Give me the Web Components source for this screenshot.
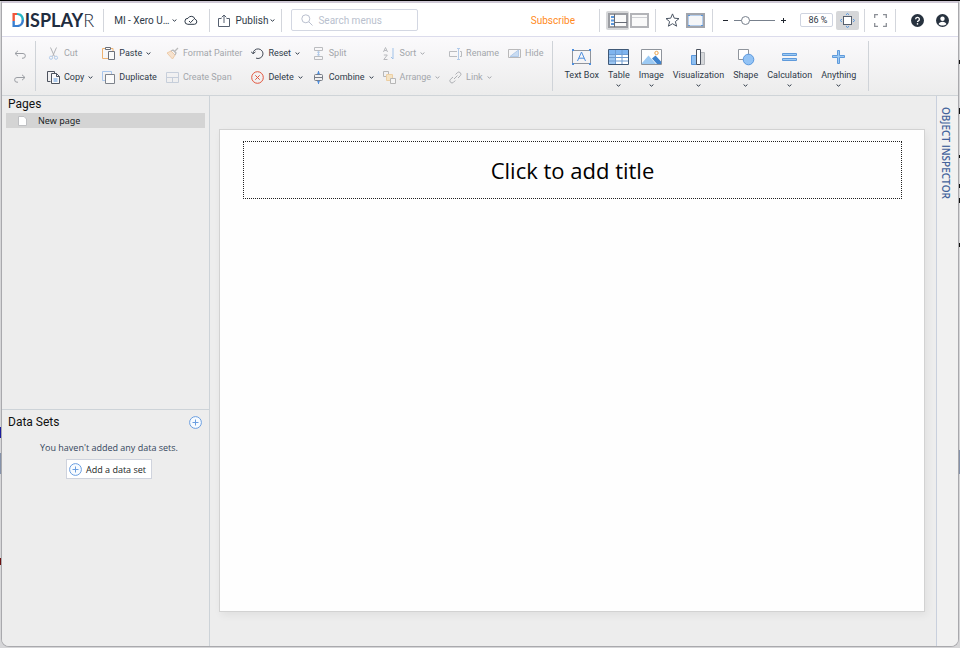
<!DOCTYPE html>
<html lang="en">
<head>
<meta charset="utf-8">
<title>Displayr</title>
<style>
  html, body { height: 100%; margin: 0; }
  body {
    box-sizing: border-box;
    background:
      linear-gradient(#00000000 60px, #111 60px 64px, #00000000 64px 108px, #111 108px 114px, #00000000 114px 155px, #111 155px 158px, #00000000 158px 184px, #111 184px 188px, #00000000 188px 198px, #111 198px 203px, #00000000 203px 243px, #111 243px 247px, #00000000 247px 450px, #8592aa 450px 474px, #00000000 474px) right / 1px 100% no-repeat,
      linear-gradient(#00000000 427px, #1c1c9c 427px 438px, #00000000 438px 453px, #8592aa 453px 474px, #00000000 474px 558px, #6b1010 558px 565px, #00000000 565px) left / 1px 100% no-repeat,
      #d6d6d8;
    border-top: 1px solid #000;
    padding: 0 1px 1px 1px;
    font-family: Roboto, "Liberation Sans", sans-serif;
    font-size: 9px;
    color: #2f3a48;
    overflow: hidden;
  }
</style>
</head>
<body>
<dr-app></dr-app>
<script>
const RESET = `
  *, *::before, *::after { box-sizing: border-box; }
  button, input { font: inherit; color: inherit; margin: 0; padding: 0; border: 0; background: none; }
  button { display: flex; align-items: center; justify-content: center; cursor: pointer; white-space: nowrap; }
  a { color: inherit; text-decoration: none; }
`;

function define(name, css, html) {
  const template = document.createElement('template');
  template.innerHTML = `<style>${RESET}${css}</style>${html}`;
  customElements.define(name, class extends HTMLElement {
    constructor() {
      super();
      this.attachShadow({ mode: 'open' }).append(template.content.cloneNode(true));
    }
  });
}

/* name: [width, height, markup] */
const ICONS = {
  chevron: [5, 3, '<path d="M.6.6 2.5 2.2 4.4.6" stroke="currentColor" stroke-width="1"/>'],
  cloud: [14, 10, '<path d="M3.8 9.3h6.6a2.6 2.6 0 0 0 .5-5.1A3.7 3.7 0 0 0 4 3.3a3 3 0 0 0-.2 6z" stroke="#2f3a48"/><path d="m5 6 1.6 1.6 3-3.2" stroke="#2f3a48"/>'],
  publish: [12, 13, '<path d="M3.500 4.500H.5v8h11v-8H8.500M6 9V1M3.700 3.300 6 1l2.300 2.300" stroke="#566070"/>'],
  search: [12, 12, '<circle cx="4.800" cy="4.800" r="4" stroke="#b9bfce"/><path d="m7.800 7.800 3.700 3.700" stroke="#b9bfce"/>'],
  layout: [20, 15, '<rect x="1" y="1" width="18" height="13" fill="#fafafa" stroke="#9b9da2" stroke-width="2"/><path d="M6.500 1v13M7 9.500h12" stroke="#666b75"/><path d="M3 4h3M3 7.500h3M3 11h3" stroke="#5a97dc" stroke-width="2"/>'],
  panel: [19, 15, '<rect x="1" y="1" width="17" height="13" fill="#fafafa" stroke="#b3b4b8" stroke-width="2"/><path d="M2 4.500h15" stroke="#cfd0d4"/>'],
  star: [15, 14, '<path d="m7.500.9 1.800 4.300 4.700.4-3.600 3 1.200 4.600-4.100-2.500-4.100 2.500 1.200-4.600-3.600-3 4.700-.4z" stroke="#4b5563"/>'],
  frame: [19, 15, '<rect x="1" y="1" width="17" height="13" fill="#f5f6f8" stroke="#a2a5ac" stroke-width="2"/><path d="M2.500 2.500h14v10h-14z" stroke="#b4cdec"/><path d="M2 2h2v1H2zM15 2h2v1h-2zM2 12h2v1H2zM15 12h2v1h-2z" fill="#5a97dc"/>'],
  minus: [5, 5, '<path d="M0 2.500h5" stroke="#20262f"/>'],
  plus: [5, 5, '<path d="M0 2.500h5M2.500 0v5" stroke="#20262f"/>'],
  fit: [15, 15, '<rect x="3.500" y="3.500" width="8" height="8" fill="#fff" stroke="#555e6c"/><path d="M6 1.800 7.500.5 9 1.800M6 13.200l1.500 1.300L9 13.200M1.800 6 .5 7.500 1.800 9M13.200 6l1.300 1.500L13.200 9" stroke="#4f93de"/>'],
  full: [13, 13, '<path d="M.7 4V.7H4M9 .7h3.300V4M12.300 9v3.300H9M4 12.300H.7V9" stroke="#8b8f96" stroke-width="1.300"/>'],
  help: [13, 13, '<circle cx="6.500" cy="6.500" r="6.500" fill="#27323f"/><path d="M4.600 5.200a1.900 1.900 0 1 1 2.800 1.700c-.6.300-.9.600-.9 1.200" stroke="#fff" stroke-width="1.300"/><circle cx="6.500" cy="9.900" r=".8" fill="#fff"/>'],
  user: [13, 13, '<circle cx="6.500" cy="6.500" r="6.500" fill="#27323f"/><circle cx="6.500" cy="4.700" r="2.200" fill="#fff"/><path d="M2.600 10.300c.3-3.400 7.500-3.400 7.800 0-2 1.600-5.800 1.600-7.800 0z" fill="#fff"/>'],
  undo: [12, 9, '<path d="M4 .8 1 3.500l3 2.700M1.200 3.500H9a2.300 2.300 0 0 1 0 4.700H8" stroke="#9a9da3"/>'],
  redo: [12, 9, '<path d="m8 .8 3 2.700-3 2.700m2.800-2.700H3a2.300 2.300 0 0 0 0 4.700h1" stroke="#9a9da3"/>'],
  cut: [13, 13, '<path d="m3.500.5 4 9M9.500.5l-4 9" stroke="#777a80"/><circle cx="4" cy="10.700" r="1.600" stroke="#7aa7de"/><circle cx="9" cy="10.700" r="1.600" stroke="#7aa7de"/>'],
  copy: [13, 13, '<path d="M3.500 10.500h-3V.5h7v2" stroke="#4d535e"/><path d="M4.500 2.500h5l3 3v7h-8z" fill="#fafafa" stroke="#4d535e"/><path d="M9.500 2.500v3h3" stroke="#4d535e"/><path d="M6.500 8h4M6.500 10h4" stroke="#5a97dc"/>'],
  paste: [13, 13, '<path d="M3 1.500H.5v10H6M9 1.500h2V4" stroke="#eeb272"/><path d="M3.500.5h5v2h-5z" fill="#fff" stroke="#6b707a"/><path d="M6.500 4.500h6v8h-6z" fill="#fafafa" stroke="#6b707a"/>'],
  duplicate: [13, 13, '<path d="M9.500 3V.5h-9v9H3" stroke="#a9c6ec"/><path d="M3.500 3.500h9v9h-9z" fill="#fafafa" stroke="#7d828b"/>'],
  painter: [13, 13, '<path d="m1 6 4-2 4 4-2.500 4z" fill="#f6d3ae" stroke="#e5a767"/><path d="m5 4 2-1 3 3-1 2M8.500 4.500 12 1" stroke="#888" stroke-width="1.300"/>'],
  span: [13, 13, '<path d="M.5 1.500h12v10H.5zM.5 6.500h12M6.500 6.500v5" stroke="#a5b4c9"/>'],
  reset: [13, 13, '<path d="M2 6.500a5 4.800 0 1 1 3 4.600M0 4.500l2 2.300 2.500-2" stroke="#454c58"/>'],
  delete: [13, 13, '<circle cx="6.500" cy="6.500" r="5.800" stroke="#e2553d"/><path d="m4.300 4.300 4.400 4.400m0-4.400L4.300 8.700" stroke="#e2553d"/>'],
  split: [13, 13, '<path d="M2.500 3.500v-3h8v3zM2.500 12.500v-3h8v3z" stroke="#8a8d93"/><path d="M6.500 4.500v4M5 5.500l1.500-1L8 5.500M5 7.500l1.500 1L8 7.500" stroke="#7aa7de"/>'],
  combine: [13, 13, '<rect x="2.500" y="3.500" width="8" height="6" rx="1" stroke="#777c85"/><path d="M2.500 6.500h8" stroke="#777c85"/><path d="M6.500 0v3M5 1.800 6.500 3 8 1.800M6.500 13v-3M5 11.200 6.500 10 8 11.200" stroke="#4f8fdd"/>'],
  sort: [13, 13, '<path d="M.5 5 2.500.5 4.500 5M1.200 3.500h2.600M.8 8h3.500L.8 12.500h3.700" stroke="#85888e"/><path d="M10 1v11M8 10l2 2" stroke="#5a97dc"/>'],
  arrange: [13, 13, '<path d="M.5.500h5v5h-5z" stroke="#888"/><path d="M3.500 3.500h6v6h-6z" fill="#f8d9a0" stroke="#e9b464"/><path d="M7.500 7.500h5v5h-5z" fill="#fafafa" stroke="#888"/>'],
  rename: [13, 13, '<path d="M8 4.500H.5v5H8M11 4.500h1.500v5H11" stroke="#8a8d93"/><path d="M9.500 2v10M8 1.500h3M8 12.500h3" stroke="#7aa7de"/>'],
  hide: [13, 13, '<path d="M.5 2.500h12v8H.5z" stroke="#888"/><path d="M2 9.500 10.500 3v6.500z" fill="#a5c7ee" stroke="#7aa7de"/>'],
  link: [13, 13, '<path d="m5 8 3.500-3.500M6.500 3.500 8.300 1.700a2 2 0 0 1 3 3L9 7M6.300 9.500l-1.800 1.800a2 2 0 0 1-3-3L4 6" stroke="#777b82"/>'],
  textbox: [21, 18, '<path d="M1.500 2.500h18v13h-18z" stroke="#8f949c"/><path d="m6.500 13 4-9 4 9M8 10.200h5" stroke="#4f8fdd"/><g fill="#4f8fdd"><path d="M1 1h2v2H1zM18 1h2v2h-2zM1 15h2v2H1zM18 15h2v2h-2z"/></g>'],
  table: [21, 18, '<path d="M.5 1.500h20v15H.5z" fill="#fff"/><path d="M1 2h19v4H1z" fill="#7fb4ef"/><path d="M1 6h6v10H1z" fill="#9cc6f2"/><path d="M1 6.500h19M1 9.500h19M1 13h19M7.500 2v14M14 2v14" stroke="#6e9cd2"/><path d="M.5 1.500h20v15H.5z" stroke="#3f5877"/>'],
  image: [21, 18, '<path d="M.5 1.500h20v15H.5z" fill="#fff" stroke="#8f949c"/><path d="m1 15 6.500-7.500L15 16H1z" fill="#9ccaf4"/><path d="m11 10.500 3.500-3 5.500 6V16h-4z" fill="#3f83cd"/><circle cx="15.500" cy="5" r="1.700" stroke="#eda54f"/>'],
  chart: [21, 18, '<path d="M3.500 7.500h5v9h-5z" fill="#8fc0f2" stroke="#5a97dc"/><path d="M12.500 4.500h4v12h-4z" fill="#d5d7da" stroke="#b5b8bd"/><path d="M8.500 1.500h4v15h-4z" fill="#fff" stroke="#4a515e"/>'],
  shape: [21, 18, '<path d="M3.500 1.500h10v10h-10z" fill="#fff" stroke="#8f949c"/><circle cx="13.500" cy="11.500" r="5.300" fill="#93c3f5" stroke="#5a97dc"/>'],
  equals: [21, 18, '<path d="M3.500 5.500h14v2h-14zM3.500 10.500h14v2h-14z" fill="#9ccaf4" stroke="#5f9adb"/>'],
  bigplus: [21, 18, '<path d="M9.500 2.500h2v5h5v2h-5v6h-2v-6h-5v-2h5z" fill="#9ccaf4" stroke="#5f9adb"/>'],
  page: [9, 10, '<path d="M.5.500h5.500l2.500 2.500v6.500h-8z" fill="#fff" stroke="#bfc0c3"/>'],
  add: [13, 13, '<circle cx="6.500" cy="6.500" r="5.900" fill="#f7fbff" stroke="#6a9ee0"/><path d="M6.500 3.500v6M3.500 6.500h6" stroke="#6a9ee0"/>']
};

customElements.define('dr-icon', class extends HTMLElement {
  constructor() {
    super();
    this.attachShadow({ mode: 'open' });
  }
  connectedCallback() {
    const [w, h, body] = ICONS[this.getAttribute('name')];
    this.shadowRoot.innerHTML = `<style>:host{display:inline-flex;flex:none}svg{display:block}</style>
      <svg width="${w}" height="${h}" viewBox="0 0 ${w} ${h}" fill="none" aria-hidden="true">${body}</svg>`;
  }
});

/* Small ribbon command: icon, label, optional menu arrow. */
customElements.define('dr-command', class extends HTMLElement {
  constructor() {
    super();
    this.attachShadow({ mode: 'open' });
  }
  connectedCallback() {
    const off = this.hasAttribute('disabled');
    this.shadowRoot.innerHTML = `<style>${RESET}
      :host { display: flex; align-items: center; }
      button { gap: 4px; height: 24px; color: #2f3a48; }
      button:disabled { color: #a3a6ab; cursor: default; }
      button:disabled .glyph { opacity: .55; }
    </style>
    <button type="button" ${off ? 'disabled' : ''}><dr-icon class="glyph" name="${this.getAttribute('icon')}"></dr-icon><span><slot></slot></span>${this.hasAttribute('menu') ? '<dr-icon name="chevron"></dr-icon>' : ''}</button>`;
  }
});

/* Large ribbon command: icon above its label. */
customElements.define('dr-insert', class extends HTMLElement {
  constructor() {
    super();
    this.attachShadow({ mode: 'open' });
  }
  connectedCallback() {
    this.shadowRoot.innerHTML = `<style>${RESET}
      :host { display: block; }
      button { flex-direction: column; justify-content: flex-start; gap: 3px; }
      span { line-height: 12px; }
    </style>
    <button type="button"><dr-icon name="${this.getAttribute('icon')}"></dr-icon><span><slot></slot></span>${this.hasAttribute('menu') ? '<dr-icon name="chevron"></dr-icon>' : ''}</button>`;
  }
});

define('dr-logo', `
  :host { display: block; font: 700 18px/20px Lato, sans-serif; color: #1f2d40; }
  .d { background: conic-gradient(from 0deg at 45% 50%, #27b5c4 0 25%, #3a7fd0 25% 72%, #f0563a 72%); -webkit-background-clip: text; background-clip: text; color: transparent; }
  .r { font-weight: 300; }
`, `<span class="d">D</span><span>ISPLAY</span><span class="r">R</span>`);

define('dr-topbar', `
  :host { display: flex; align-items: center; height: 34px; padding: 1px 9px 0 9px; background: #fff; border-bottom: 1px solid #dcdcec; font-size: 10px; }
  .sep { width: 1px; height: 23px; background: #d3d6dc; flex: none; }
  .group { display: flex; align-items: center; gap: 4px; padding: 0 9px; flex: none; }
  .brand { padding: 0 9px 0 0; }
  .doc { gap: 3px; padding: 0 11px 0 10px; }
  .doc button:first-child, .pub button { gap: 3px; }
  .doc button:last-child { margin-left: 4px; }
  .pub { padding: 0 6px 0 8px; }
  .pub button { gap: 2px; }
  .pub span { padding-left: 3px; }
  .search { display: flex; align-items: center; gap: 5px; width: 127px; height: 22px; margin-left: 9px; padding: 0 9px; border: 1px solid #d3d7e2; border-radius: 2px; }
  .search input { width: 100%; min-width: 0; outline: 0; }
  .search input::placeholder { color: #b9bfce; opacity: 1; }
  .subscribe { margin-left: auto; padding-right: 24px; color: #ff8a1c; }
  .views { gap: 1px; padding: 0 6px; }
  .on { background: #d6d7d9; border-radius: 2px; }
  .views .on { width: 23px; height: 19px; }
  .slides { gap: 6px; padding: 0 7px 0 9px; }
  .zoom { gap: 6px; padding: 0 5px 0 10px; }
  input[type=range] { appearance: none; width: 41px; height: 11px; }
  input[type=range]::-webkit-slider-runnable-track { height: 1px; background: #77808c; }
  input[type=range]::-webkit-slider-thumb { appearance: none; width: 9px; height: 9px; margin-top: -4px; border: 1px solid #77808c; border-radius: 50%; background: #fff; }
  .pct { width: 33px; height: 14px; margin-left: 8px; padding-left: 3px; border: 1px solid #cfd4e0; border-radius: 2px; text-align: center; font-size: 9px; }
  .fit { width: 23px; height: 19px; margin-left: -3px; }
  .full { padding: 0 8px 0 9px; }
  .account { gap: 12px; padding: 0 0 0 15px; }
`, `
  <div class="group brand"><dr-logo></dr-logo></div>
  <i class="sep"></i>
  <div class="group doc"><button type="button"><span>MI - Xero U…</span><dr-icon name="chevron"></dr-icon></button><button type="button" aria-label="Saved"><dr-icon name="cloud"></dr-icon></button></div>
  <i class="sep"></i>
  <div class="group pub"><button type="button"><dr-icon name="publish"></dr-icon><span>Publish</span><dr-icon name="chevron"></dr-icon></button></div>
  <i class="sep"></i>
  <label class="search"><dr-icon name="search"></dr-icon><input type="text" placeholder="Search menus" aria-label="Search menus"></label>
  <a class="subscribe" href="#subscribe">Subscribe</a>
  <i class="sep"></i>
  <div class="group views"><button type="button" class="on" aria-label="Show side panel"><dr-icon name="layout"></dr-icon></button><button type="button" aria-label="Hide side panel"><dr-icon name="panel"></dr-icon></button></div>
  <i class="sep"></i>
  <div class="group slides"><button type="button" aria-label="Favorite"><dr-icon name="star"></dr-icon></button><button type="button" aria-label="Page frame"><dr-icon name="frame"></dr-icon></button></div>
  <i class="sep"></i>
  <div class="group zoom">
    <button type="button" aria-label="Zoom out"><dr-icon name="minus"></dr-icon></button>
    <input type="range" min="0" max="100" value="22" aria-label="Zoom">
    <button type="button" aria-label="Zoom in"><dr-icon name="plus"></dr-icon></button>
    <input class="pct" type="text" value="86 %" aria-label="Zoom level">
    <button type="button" class="fit on" aria-label="Fit page"><dr-icon name="fit"></dr-icon></button>
  </div>
  <i class="sep"></i>
  <div class="group full"><button type="button" aria-label="Full screen"><dr-icon name="full"></dr-icon></button></div>
  <i class="sep"></i>
  <div class="group account"><button type="button" aria-label="Help"><dr-icon name="help"></dr-icon></button><button type="button" aria-label="Account"><dr-icon name="user"></dr-icon></button></div>
`);

define('dr-ribbon', `
  :host { display: flex; align-items: center; height: 59px; padding-left: 12px; background: linear-gradient(#fbfafc, #ececec); border-bottom: 1px solid #cfd4d8; }
  .sep { width: 1px; height: 50px; background: #cfd3d8; flex: none; }
  .history { display: grid; grid-template-rows: 24px 24px; width: 21px; flex: none; }
  .history button { justify-content: flex-start; }
  .edit { display: grid; grid-template-rows: 24px 24px; grid-auto-flow: column; grid-auto-columns: max-content; column-gap: 9px; padding: 0 9px 2px 11px; }
  .insert { display: flex; gap: 9px; padding: 3px 12px 0 11px; }
`, `
  <div class="history"><button type="button" disabled aria-label="Undo"><dr-icon name="undo"></dr-icon></button><button type="button" disabled aria-label="Redo"><dr-icon name="redo"></dr-icon></button></div>
  <i class="sep"></i>
  <div class="edit">
    <dr-command icon="cut" disabled>Cut</dr-command><dr-command icon="copy" menu>Copy</dr-command>
    <dr-command icon="paste" menu>Paste</dr-command><dr-command icon="duplicate">Duplicate</dr-command>
    <dr-command icon="painter" disabled>Format Painter</dr-command><dr-command icon="span" disabled>Create Span</dr-command>
    <dr-command icon="reset" menu>Reset</dr-command><dr-command icon="delete" menu>Delete</dr-command>
    <dr-command icon="split" disabled>Split</dr-command><dr-command icon="combine" menu>Combine</dr-command>
    <dr-command icon="sort" disabled menu>Sort</dr-command><dr-command icon="arrange" disabled menu>Arrange</dr-command>
    <dr-command icon="rename" disabled>Rename</dr-command><dr-command icon="link" disabled menu>Link</dr-command>
    <dr-command icon="hide" disabled>Hide</dr-command>
  </div>
  <i class="sep"></i>
  <div class="insert">
    <dr-insert icon="textbox">Text Box</dr-insert>
    <dr-insert icon="table" menu>Table</dr-insert>
    <dr-insert icon="image" menu>Image</dr-insert>
    <dr-insert icon="chart" menu>Visualization</dr-insert>
    <dr-insert icon="shape" menu>Shape</dr-insert>
    <dr-insert icon="equals" menu>Calculation</dr-insert>
    <dr-insert icon="bigplus" menu>Anything</dr-insert>
  </div>
  <i class="sep"></i>
`);

define('dr-sidebar', `
  :host { display: flex; flex-direction: column; width: 208px; border-right: 1px solid #cdd3d8; background: #ededed; color: #1b1f26; }
  section { padding: 0 4px; }
  .pages { flex: 1; }
  .data { height: 237px; border-top: 1px solid #cdd3d8; padding-top: 3px; }
  header { display: flex; align-items: center; justify-content: space-between; padding: 0 3px 0 2px; }
  h2 { margin: 0; font: 400 12px/17px Roboto, sans-serif; color: #111; }
  .row { width: 100%; height: 15px; justify-content: flex-start; gap: 11px; padding-left: 12px; background: #d4d4d4; font: 9px/15px "Noto Sans", sans-serif; }
  .data header { height: 19px; }
  .empty { display: flex; flex-direction: column; align-items: center; gap: 5px; padding: 9px 0 0 7px; font: 9px/13px "Open Sans", sans-serif; }
  p { margin: 0; color: #34465c; }
  .add { gap: 4px; height: 20px; padding: 0 5px 0 2px; background: #fff; border: 1px solid #cfd3dd; }
`, `
  <section class="pages"><header><h2>Pages</h2></header>
    <button type="button" class="row"><dr-icon name="page"></dr-icon><span>New page</span></button></section>
  <section class="data"><header><h2>Data Sets</h2><button type="button" aria-label="Add"><dr-icon name="add"></dr-icon></button></header>
    <div class="empty"><p>You haven't added any data sets.</p>
    <button type="button" class="add"><dr-icon name="add"></dr-icon><span>Add a data set</span></button></div></section>
`);

define('dr-canvas', `
  :host { display: flex; flex: 1; min-width: 0; padding: 33px 11px 34px 9px; background: #ededed; }
  .slide { flex: 1; padding: 11px 22px 0 23px; background: #fefefe; border: 1px solid #d2d2d2; box-shadow: 2px 3px 8px #0000000f; }
  h1 { margin: 0; border: 1px dotted #222; text-align: center; font: 400 22px/56px "Open Sans", sans-serif; color: #000; }
`, `<div class="slide"><h1>Click to add title</h1></div>`);

define('dr-inspector', `
  :host { display: block; width: 22px; background: #f1f1f1; border-left: 1px solid #c9d0dd; }
  button { writing-mode: vertical-rl; width: 18px; padding-top: 11px; font: 600 10px/18px "Open Sans", sans-serif; color: #44639b; }
`, `<button type="button">OBJECT INSPECTOR</button>`);

define('dr-app', `
  :host { display: flex; flex-direction: column; height: 100%; border: 1px solid #a9a9ad; border-top: 2px solid #cfc9d6; border-radius: 0 0 8px 8px; overflow: hidden; background: #ededed; box-sizing: border-box; }
  main { display: flex; flex: 1; min-height: 0; }
`, `<dr-topbar></dr-topbar><dr-ribbon></dr-ribbon><main><dr-sidebar></dr-sidebar><dr-canvas></dr-canvas><dr-inspector></dr-inspector></main>`);
</script>
</body>
</html>
